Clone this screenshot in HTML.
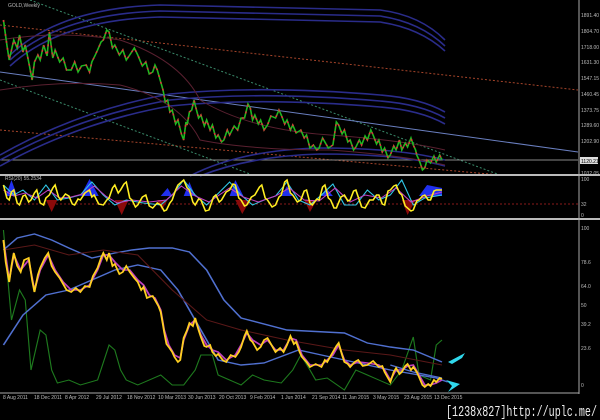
<!DOCTYPE html>
<html><head><meta charset="utf-8"><style>
html,body{margin:0;padding:0;background:#000;width:600px;height:420px;overflow:hidden}
svg{display:block}
text{font-family:"Liberation Sans",sans-serif;fill:#bbb}
</style></head><body>
<svg width="600" height="420" viewBox="0 0 600 420" xmlns="http://www.w3.org/2000/svg">
<rect width="600" height="420" fill="#000"/>
<line x1="0" y1="25" x2="578" y2="90" stroke="#a5442a" stroke-width="1" stroke-dasharray="2,2"/>
<line x1="0" y1="130" x2="500" y2="175" stroke="#a5442a" stroke-width="1" stroke-dasharray="2,2"/>
<line x1="30" y1="0" x2="500" y2="175" stroke="#3a8a6a" stroke-width="1" stroke-dasharray="2,2"/>
<line x1="0" y1="80" x2="250" y2="174" stroke="#3a8a6a" stroke-width="1" stroke-dasharray="2,2"/>
<line x1="0" y1="72" x2="578" y2="152" stroke="#6a7fc0" stroke-width="1"/>
<line x1="0" y1="160" x2="578" y2="160" stroke="#888" stroke-width="1"/>
<g fill="none" stroke="#2a2c8a" stroke-width="1.6">
<path d="M10 55 Q60 8 160 5 L380 10 Q420 15 445 40"/>
<path d="M10 60 Q60 14 160 11 L380 16 Q420 22 445 46"/>
<path d="M10 66 Q60 20 160 17 L380 22 Q420 28 445 51"/>
<path d="M0 155 Q80 110 170 94 Q260 85 380 95 Q420 98 445 112"/>
<path d="M0 160 Q80 116 170 100 Q260 91 380 101 Q420 104 445 118"/>
<path d="M0 166 Q80 122 170 106 Q260 97 380 107 Q420 110 445 124"/>
<path d="M190 176 Q240 150 320 148 Q400 148 445 160"/>
<path d="M200 176 Q250 156 320 154 Q400 154 445 166"/>
</g>
<g fill="none" stroke="#5a2030" stroke-width="1">
<path d="M0 40 Q60 30 120 40 Q180 60 200 100 Q250 130 330 135 Q400 140 445 150"/>
<path d="M0 90 Q60 80 120 85 Q180 100 200 140 Q250 150 330 150 Q400 155 445 165"/>
</g>
<g transform="scale(1.148,1)">
<polyline fill="none" stroke="#1fb81f" stroke-width="1.4" points="3,20 6,45 8,60 10,50 12,40 15,48 17,35 20,52 22,45 25,62 28,80 30,62 33,55 35,60 38,45 41,56 43,32 46,58 48,50 52,62 55,58 58,70 62,70 65,62 68,72 71,66 75,65 78,72 80,62 83,55 85,50 88,42 90,40 93,30 95,32 98,48 100,45 104,55 107,50 110,60 113,55 117,48 120,55 124,66 127,62 130,74 133,72 135,65 137,70 140,82 142,90 144,102 146,100 148,112 150,110 153,124 155,120 158,134 160,140 162,122 163,125 165,112 167,110 169,100 170,105 173,118 175,115 178,126 180,120 183,130 185,125 188,138 190,135 193,142 195,140 198,130 200,135 204,126 207,130 210,118 213,118 216,104 218,108 220,120 222,115 225,124 227,120 230,130 233,125 236,116 240,118 243,110 245,115 248,124 250,120 253,130 255,125 258,133 262,130 265,138 267,135 270,148 273,145 276,150 278,148 281,138 283,142 286,148 290,145 293,122 295,125 298,134 300,130 303,142 305,140 308,150 310,147 313,140 315,145 318,136 320,140 323,130 325,135 328,144 330,140 333,152 335,148 338,158 340,155 343,146 345,150 348,140 350,150 353,143 355,147 358,138 360,145 362,150 363,155 365,160 366,163 368,170 370,168 372,160 375,163 378,156 380,162 383,155 385,160"/>
<polyline fill="none" stroke="#d83a3a" stroke-width="1.4" stroke-dasharray="2,5" points="3,20 6,45 8,60 10,50 12,40 15,48 17,35 20,52 22,45 25,62 28,80 30,62 33,55 35,60 38,45 41,56 43,32 46,58 48,50 52,62 55,58 58,70 62,70 65,62 68,72 71,66 75,65 78,72 80,62 83,55 85,50 88,42 90,40 93,30 95,32 98,48 100,45 104,55 107,50 110,60 113,55 117,48 120,55 124,66 127,62 130,74 133,72 135,65 137,70 140,82 142,90 144,102 146,100 148,112 150,110 153,124 155,120 158,134 160,140 162,122 163,125 165,112 167,110 169,100 170,105 173,118 175,115 178,126 180,120 183,130 185,125 188,138 190,135 193,142 195,140 198,130 200,135 204,126 207,130 210,118 213,118 216,104 218,108 220,120 222,115 225,124 227,120 230,130 233,125 236,116 240,118 243,110 245,115 248,124 250,120 253,130 255,125 258,133 262,130 265,138 267,135 270,148 273,145 276,150 278,148 281,138 283,142 286,148 290,145 293,122 295,125 298,134 300,130 303,142 305,140 308,150 310,147 313,140 315,145 318,136 320,140 323,130 325,135 328,144 330,140 333,152 335,148 338,158 340,155 343,146 345,150 348,140 350,150 353,143 355,147 358,138 360,145 362,150 363,155 365,160 366,163 368,170 370,168 372,160 375,163 378,156 380,162 383,155 385,160"/>
</g>
<text x="8" y="7" font-size="5">GOLD,Weekly</text>
<rect x="0" y="174" width="600" height="2" fill="#bbb"/>
<rect x="0" y="218" width="600" height="2" fill="#bbb"/>
<line x1="579" y1="0" x2="579" y2="394" stroke="#aaa" stroke-width="1"/>
<line x1="0" y1="204" x2="579" y2="204" stroke="#8a1a1a" stroke-dasharray="2,2"/>
<g transform="scale(1.148,1)">
<path d="M5 196 L10 180 L15 196 Z M70 196 L78 179 L86 196 Z M140 196 L146 188 L150 196 Z M160 196 L165 182 L170 196 Z M200 196 L205 180 L212 196 Z M245 196 L250 186 L255 196 Z M280 196 L284 188 L290 196 Z M365 196 L372 185 L385 188 L385 196 Z" fill="#2030ee"/>
<path d="M40 200 L45 212 L50 200 Z M100 200 L106 215 L112 200 Z M137 200 L141 210 L146 200 Z M205 200 L211 214 L218 200 Z M265 200 L270 212 L276 200 Z M350 200 L355 215 L362 200 Z" fill="#8a0a0a"/>
<polyline fill="none" stroke="#30c8e8" stroke-width="1" points="3,185 12,195 20,190 30,200 40,185 50,200 60,198 70,195 80,182 90,195 100,205 110,200 125,203 140,205 150,195 160,180 170,195 180,205 200,182 210,195 220,205 230,200 240,196 250,182 260,200 270,205 280,195 290,184 300,205 310,205 320,190 330,200 340,195 350,180 360,205 370,198 385,195"/>
<polyline fill="none" stroke="#c040c0" stroke-width="1" points="3,190 12,196 22,193 32,198 42,190 52,198 62,197 72,194 82,186 92,196 102,203 115,200 130,202 145,200 158,186 170,196 182,202 200,188 212,197 225,202 240,196 252,188 265,200 278,201 292,188 305,202 318,195 332,198 345,188 358,202 372,196 385,192"/>
<polyline fill="none" stroke="#ffee22" stroke-width="1.4" points="3,185 6,198 8,200 10,192 12,190 15,203 17,205 20,196 22,195 25,202 27,200 30,193 32,190 35,203 38,205 40,198 43,195 46,188 48,185 51,197 53,200 57,194 60,196 63,204 65,205 68,199 70,200 74,193 78,190 80,197 82,195 86,204 90,205 93,200 95,198 98,188 100,185 103,193 105,190 108,184 110,182 113,198 115,200 118,207 120,205 124,197 127,195 130,206 133,208 137,203 140,205 143,211 145,210 148,203 150,200 153,190 155,185 158,182 160,180 163,188 165,190 168,202 170,205 173,199 175,200 179,211 182,210 186,197 188,195 191,202 193,200 197,192 200,190 203,184 205,185 208,198 210,200 213,206 215,205 219,197 222,195 226,187 228,185 231,198 233,200 237,207 240,205 243,197 245,195 248,182 250,180 253,193 255,195 259,202 262,200 265,191 267,190 270,203 272,205 276,199 278,200 281,187 283,185 286,198 288,200 291,208 293,208 297,197 300,195 303,201 305,200 308,191 310,190 315,207 318,208 322,200 325,200 328,195 330,195 333,204 335,205 338,191 340,190 343,186 345,185 348,193 350,195 353,206 355,208 358,211 360,210 363,201 365,200 368,196 370,195 373,200 375,200 378,191 380,190 385,190"/>
</g>
<g transform="scale(1.148,1)" fill="none">
<polyline stroke="#1e7a1e" stroke-width="1" points="3,230 10,320 17,290 22,300 27,370 35,330 40,335 45,370 50,383 60,380 70,385 85,380 95,345 100,350 105,370 110,380 120,385 140,375 150,385 160,385 170,370 175,355 185,355 190,375 200,380 210,385 220,375 230,380 245,383 255,370 262,355 270,370 275,380 285,378 300,390 310,370 320,375 340,385 350,370 360,337 365,375 375,380 380,345 385,340"/>
<polyline stroke="#5070d0" stroke-width="1.4" points="3,345 20,315 40,295 60,290 80,280 100,270 120,265 140,270 155,290 170,320 190,360 210,365 230,363 260,350 280,355 300,360 340,370 380,378 390,382"/>
<polyline stroke="#5070d0" stroke-width="1.4" points="3,250 15,238 30,234 45,240 60,248 80,258 100,253 115,250 130,248 150,248 165,252 180,270 195,300 210,318 250,330 300,333 320,343 340,347 360,350 385,362"/>
<polyline stroke="#5070d0" stroke-width="1.2" points="340,365 360,372 385,378"/>
<polyline stroke="#5a1818" stroke-width="1" points="3,250 30,245 60,255 90,250 120,255 150,290 180,320 210,330 250,340 300,350 340,355 385,365"/>
<polyline stroke="#c040c0" stroke-width="1.6" points="3,240 8,280 12,255 18,270 25,260 30,290 35,270 42,255 48,270 55,282 62,290 70,290 78,285 85,270 90,255 95,255 100,262 107,270 113,270 120,280 125,285 130,295 135,298 140,310 143,330 147,345 152,355 157,358 160,340 165,325 170,320 175,335 180,345 185,350 190,352 197,360 205,355 210,345 215,333 220,340 227,345 233,340 240,350 247,350 253,338 258,340 263,355 270,365 280,365 285,360 290,355 295,345 300,360 305,365 312,362 320,363 330,365 335,370 340,380 345,370 350,370 355,366 360,365 365,375 370,385 375,385 380,383 385,380"/>
<polyline stroke="#ffd020" stroke-width="1.6" points="3,240 5,262 8,282 10,266 12,253 15,266 18,272 21,260 25,258 28,280 30,292 33,275 35,268 39,258 42,253 45,266 48,272 52,278 55,284 58,290 62,292 66,288 70,292 74,286 78,287 81,276 85,268 88,258 90,253 93,260 95,253 98,266 100,264 104,274 107,272 110,266 113,272 117,278 120,282 123,290 125,287 128,298 130,297 133,296 135,300 138,306 140,312 142,325 143,332 145,344 147,347 150,352 152,357 155,362 157,360 159,345 160,338 163,330 165,323 168,326 170,318 173,330 175,337 178,346 180,347 183,345 185,352 188,356 190,354 194,360 197,362 201,355 205,357 208,352 210,347 213,336 215,331 218,340 220,342 224,350 227,347 230,340 233,338 237,346 240,352 244,348 247,352 250,345 253,336 256,344 258,342 261,352 263,357 267,362 270,367 275,364 280,367 283,360 285,362 288,356 290,352 293,346 295,343 298,355 300,362 303,364 305,367 309,362 312,360 316,366 320,365 325,361 330,367 333,366 335,372 338,378 340,382 343,372 345,368 348,374 350,372 353,366 355,364 358,370 360,367 363,372 365,377 368,385 370,387 373,384 375,386 378,380 380,382 383,378 385,379"/>
</g>
<path d="M448 362 L465 353 L462 358 L452 364 Z" fill="#30d8ec"/>
<path d="M446 380 L460 384 L448 392 L452 386 Z" fill="#30d8ec"/>
<line x1="0" y1="393" x2="579" y2="393" stroke="#aaa"/>
<g font-size="5">
<text x="3" y="399">8 Aug 2011</text><text x="34" y="399">18 Dec 2011</text><text x="65" y="399">8 Apr 2012</text>
<text x="96" y="399">29 Jul 2012</text><text x="127" y="399">18 Nov 2012</text><text x="158" y="399">10 Mar 2013</text>
<text x="188" y="399">30 Jun 2013</text><text x="219" y="399">20 Oct 2013</text><text x="250" y="399">9 Feb 2014</text>
<text x="281" y="399">1 Jun 2014</text><text x="312" y="399">21 Sep 2014</text><text x="342" y="399">11 Jan 2015</text>
<text x="373" y="399">3 May 2015</text><text x="404" y="399">23 Aug 2015</text><text x="434" y="399">13 Dec 2015</text>
<text x="581" y="17">1891.40</text><text x="581" y="33">1804.70</text><text x="581" y="49">1718.00</text>
<text x="581" y="64">1631.30</text><text x="581" y="80">1547.15</text><text x="581" y="96">1460.45</text>
<text x="581" y="112">1373.75</text><text x="581" y="127">1289.60</text><text x="581" y="143">1202.90</text>
<text x="581" y="175">1032.05</text>
<text x="581" y="181">100</text><text x="581" y="206">32</text><text x="581" y="217">0</text>
<text x="581" y="230">100</text><text x="581" y="264">78.6</text><text x="581" y="288">64.0</text>
<text x="581" y="307">50</text><text x="581" y="326">39.2</text><text x="581" y="350">23.6</text><text x="581" y="387">0</text>
<text x="5" y="180">RSI(20) 55.2534</text>
</g>
<rect x="580" y="157" width="18" height="7" fill="#ddd"/>
<text x="581" y="163" font-size="5" style="fill:#000">1120.21</text>
<text x="446" y="416" font-size="15" style="fill:#eee;font-family:'Liberation Mono',monospace" textLength="151" lengthAdjust="spacingAndGlyphs">[1238x827]http://uplc.me/</text>
</svg>
</body></html>
